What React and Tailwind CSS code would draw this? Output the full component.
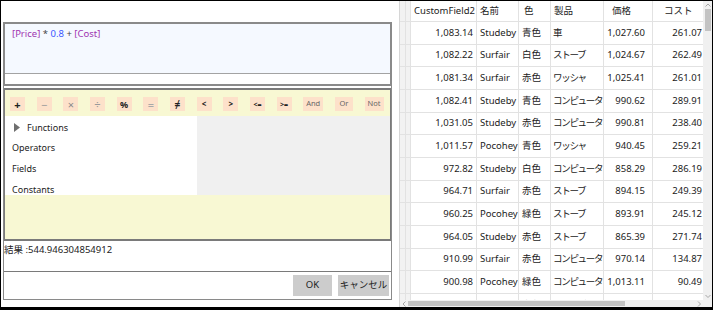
import React from 'react';

const rows = [
  ['1,083.14', 'Studeby', '青色', '車', '1,027.60', '261.07'],
  ['1,082.22', 'Surfair', '白色', 'ストーブ', '1,024.67', '262.49'],
  ['1,081.34', 'Surfair', '赤色', 'ワッシャ', '1,025.41', '261.01'],
  ['1,082.41', 'Studeby', '青色', 'コンピュータ', '990.62', '289.91'],
  ['1,031.05', 'Studeby', '赤色', 'コンピュータ', '990.81', '238.40'],
  ['1,011.57', 'Pocohey', '青色', 'ワッシャ', '940.45', '259.21'],
  ['972.82', 'Studeby', '白色', 'コンピュータ', '858.29', '286.19'],
  ['964.71', 'Surfair', '赤色', 'ストーブ', '894.15', '249.39'],
  ['960.25', 'Pocohey', '緑色', 'ストーブ', '893.91', '245.12'],
  ['964.05', 'Studeby', '赤色', 'ストーブ', '865.39', '271.74'],
  ['910.99', 'Surfair', '赤色', 'コンピュータ', '970.14', '134.87'],
  ['900.98', 'Pocohey', '緑色', 'コンピュータ', '1,013.11', '90.49'],
  ['887.47', 'Surfair', '白色', 'ストーブ', '882.68', '215.27'],
];

const ops = [
  { t: '+', w: 'w-[15px]', c: 'text-[#222] font-bold text-[11px]' },
  { t: '−', w: 'w-[15px]', c: 'text-[#9a9a9a] text-[11px]' },
  { t: '×', w: 'w-[15px]', c: 'text-[#8a8a8a] text-[11px]' },
  { t: '÷', w: 'w-[15px]', c: 'text-[#9a9a9a] text-[11px]' },
  { t: '%', w: 'w-[15px]', c: 'text-[#222] font-bold text-[9px]' },
  { t: '=', w: 'w-[15px]', c: 'text-[#a8a8a8] text-[11px]' },
  { t: '≠', w: 'w-[15px]', c: 'text-[#222] font-bold text-[10px]' },
  { t: '<', w: 'w-[15px]', c: 'text-[#222] font-bold text-[8px]' },
  { t: '>', w: 'w-[15px]', c: 'text-[#222] font-bold text-[8px]' },
  { t: '<=', w: 'w-[15px]', c: 'text-[#222] font-bold text-[7px]' },
  { t: '>=', w: 'w-[15px]', c: 'text-[#222] font-bold text-[7px]' },
  { t: 'And', w: 'w-[20px]', c: 'text-[#666] text-[7.5px]' },
  { t: 'Or', w: 'w-[18px]', c: 'text-[#666] text-[7.5px]' },
  { t: 'Not', w: 'w-[19px]', c: 'text-[#666] text-[7.5px]' },
];

// widths of the grid columns, border included
const cols = [
  { w: 'w-[66px]', head: 'pl-[3px]', cell: 'justify-end pr-[3px]' },
  { w: 'w-[42px]', head: 'pl-[3px]', cell: 'pl-[3px]' },
  { w: 'w-[32px]', head: 'pl-[5px]', cell: 'pl-[3px]' },
  { w: 'w-[53px]', head: 'pl-[3px]', cell: 'pl-[2px] tracking-[-1.3px]' },
  { w: 'w-[49px]', head: 'pl-[8px]', cell: 'justify-end pr-[7px]' },
  { w: 'w-[50px]', head: 'pl-[11px]', cell: 'justify-end pr-[1px]' },
];
const heads = ['CustomField2', '名前', '色', '製品', '価格', 'コスト'];

function Chevron({ dir }) {
  const d = {
    up: 'M0.5 3.5 L3 1 L5.5 3.5',
    down: 'M0.5 1 L3 3.5 L5.5 1',
    left: 'M3.5 0.5 L1 3 L3.5 5.5',
    right: 'M1 0.5 L3.5 3 L1 5.5',
  }[dir];
  const vertical = dir === 'up' || dir === 'down';
  return (
    <svg width={vertical ? 6 : 5} height={vertical ? 5 : 6} viewBox={vertical ? '0 0 6 5' : '0 0 5 6'}>
      <path d={d} fill="none" stroke="#a6a6a6" strokeWidth="1" />
    </svg>
  );
}

function LeftPanel() {
  return (
    <div className="w-[398px] h-full pl-[2px] pt-[21px]">
      <div className="w-[389px] h-[278px] border-x border-b border-[#8a8a8a] flex flex-col">
        <div className="h-[64px] border-t-2 border-b-2 border-x border-[#8a8a8a] flex flex-col">
          <div className="h-[50px] bg-[#f5f9ff] border-b border-[#a3a3a3] px-[7px] pt-[3px] text-[9.5px] leading-[14px]">
            <span className="text-[#a033b0]">[Price]</span>
            <span className="text-[#444]"> * </span>
            <span className="text-[#3a55ff]">0.8</span>
            <span className="text-[#444]"> + </span>
            <span className="text-[#a033b0]">[Cost]</span>
          </div>
          <div className="flex-1 bg-white" />
        </div>
        <div className="h-[2px]" />
        <div className="h-[153px] border-t-2 border-b-2 border-x border-[#7a7a7a] bg-[#f8f8d3] flex flex-col">
          <div className="h-[26px] pt-[7px] pl-[5px] flex gap-[11.67px]">
            {ops.map((o) => (
              <div key={o.t} className={`${o.w} h-[14px] bg-[#fde1ca] flex items-center justify-center leading-none ${o.c}`}>
                {o.t}
              </div>
            ))}
          </div>
          <div className="h-[79px] flex">
            <div className="w-[192px] bg-white pt-[1px] text-[9px] text-[#222]">
              <div className="h-[20.67px] flex items-center pl-[9px] gap-[7px]">
                <svg width="6" height="9" viewBox="0 0 6 9">
                  <polygon points="0,0 6,4.5 0,9" fill="#6f6f6f" />
                </svg>
                <span>Functions</span>
              </div>
              <div className="h-[20.67px] flex items-center pl-[7px]">Operators</div>
              <div className="h-[20.67px] flex items-center pl-[7px]">Fields</div>
              <div className="h-[15px] flex items-start pl-[7px] pt-[5px] overflow-hidden leading-[12px]">Constants</div>
            </div>
            <div className="flex-1 bg-[#f0f0f0]" />
          </div>
          <div className="flex-1" />
        </div>
        <div className="h-[30px] pt-[2px] text-[9.5px] leading-[14px] text-[#222]">結果 :544.946304854912</div>
        <div className="flex-1 border-t border-[#7a7a7a] flex justify-end items-start pt-[3px] pr-[2px] gap-[6px] text-[9.5px] text-[#222]">
          <div className="w-[39px] h-[21px] bg-[#cccccc] flex items-center justify-center">OK</div>
          <div className="w-[51px] h-[21px] bg-[#cccccc] flex items-center justify-center">キャンセル</div>
        </div>
      </div>
    </div>
  );
}

function Grid() {
  return (
    <div className="flex-1 h-full border-l border-[#d6d6d6] flex text-[9.5px] text-[#222]">
      <div className="w-[303px] h-full flex flex-col">
        <div className="h-[21px] flex border-b border-[#e2e2e2] shrink-0">
          <div className="w-[6px] bg-[#f2f2f2] border-r border-[#e2e2e2]" />
          <div className="w-[5px] bg-[#f2f2f2] border-r border-[#e2e2e2]" />
          {cols.map((c, i) => (
            <div key={i} className={`${c.w} ${c.head} flex items-center border-r border-[#e2e2e2] last:border-r-0 whitespace-nowrap`}>
              {heads[i]}
            </div>
          ))}
        </div>
        <div className="flex-1 overflow-hidden">
          {rows.map((r, ri) => (
            <div key={ri} className="h-[22.67px] flex border-b border-[#e2e2e2]">
              <div className="w-[6px] bg-[#f2f2f2] border-r border-[#e2e2e2]" />
              <div className="w-[5px] bg-[#f2f2f2] border-r border-[#e2e2e2]" />
              {cols.map((c, i) => (
                <div key={i} className={`${c.w} ${c.cell} flex items-center border-r border-[#e2e2e2] last:border-r-0 whitespace-nowrap overflow-hidden`}>
                  {r[i]}
                </div>
              ))}
            </div>
          ))}
        </div>
        <div className="h-[7px] shrink-0 bg-[#f0f0f0] flex items-center">
          <div className="w-[8px] flex justify-center">
            <Chevron dir="left" />
          </div>
          <div className="w-[217px] h-[5px] bg-[#c3c3c3]" />
          <div className="flex-1" />
          <div className="w-[8px] flex justify-center">
            <Chevron dir="right" />
          </div>
        </div>
      </div>
      <div className="w-[9px] h-full bg-[#f0f0f0] flex flex-col items-center">
        <div className="h-[8px] flex items-center">
          <Chevron dir="up" />
        </div>
        <div className="w-[6px] h-[22px] bg-[#c3c3c3]" />
        <div className="flex-1" />
        <div className="h-[8px] flex items-center">
          <Chevron dir="down" />
        </div>
        <div className="h-[7px]" />
      </div>
    </div>
  );
}

export default function App() {
  return (
    <div className="w-[713px] h-[310px] bg-white border-t border-l border-r border-b-[3px] border-black flex overflow-hidden font-['Noto_Sans','Noto_Sans_CJK_JP',sans-serif]">
      <LeftPanel />
      <Grid />
    </div>
  );
}
